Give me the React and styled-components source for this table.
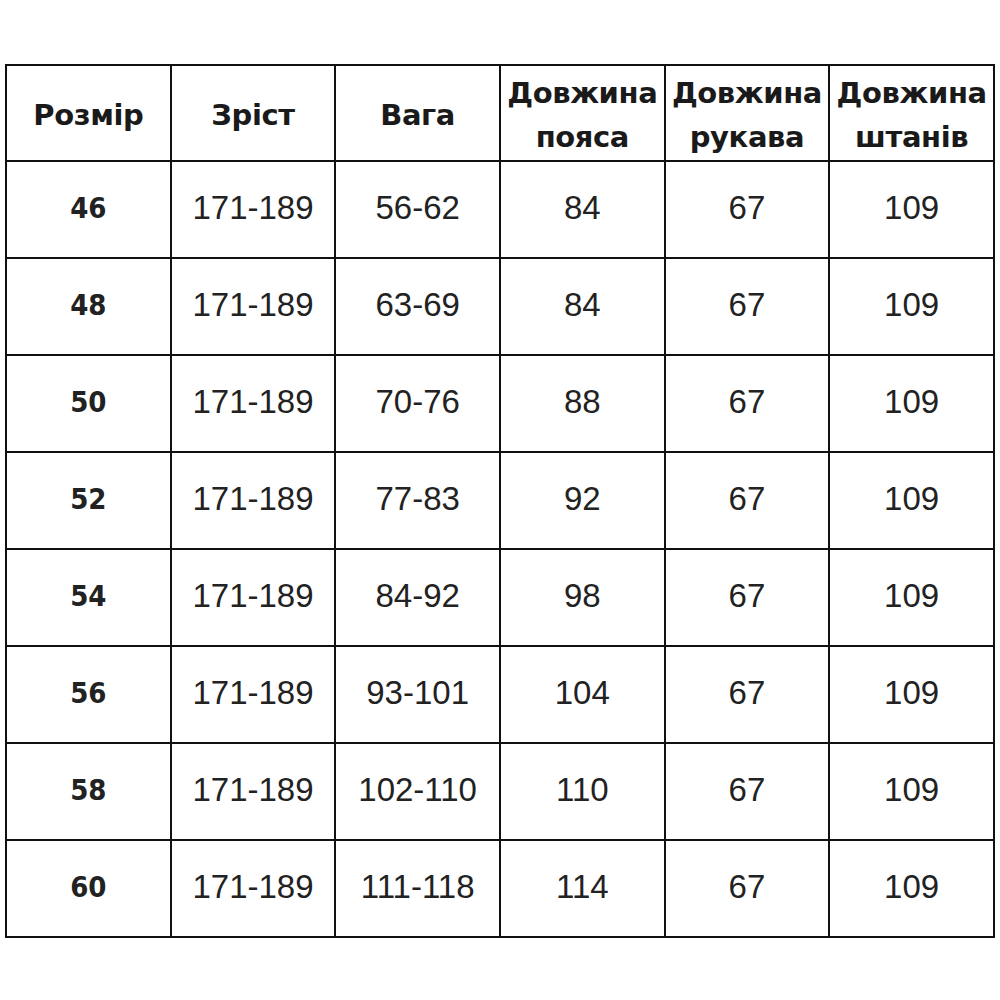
import React from "react";
import styled, { createGlobalStyle } from "styled-components";

const GlobalStyle = createGlobalStyle`
  html, body {
    margin: 0;
    padding: 0;
    background: #ffffff;
  }
`;

const headers = [
  ["Розмір"],
  ["Зріст"],
  ["Вага"],
  ["Довжина", "пояса"],
  ["Довжина", "рукава"],
  ["Довжина", "штанів"],
];

const rows = [
  ["46", "171-189", "56-62", "84", "67", "109"],
  ["48", "171-189", "63-69", "84", "67", "109"],
  ["50", "171-189", "70-76", "88", "67", "109"],
  ["52", "171-189", "77-83", "92", "67", "109"],
  ["54", "171-189", "84-92", "98", "67", "109"],
  ["56", "171-189", "93-101", "104", "67", "109"],
  ["58", "171-189", "102-110", "110", "67", "109"],
  ["60", "171-189", "111-118", "114", "67", "109"],
];

export default function App() {
  return (
    <>
      <GlobalStyle />
      <Page>
        <SizeTable>
          <thead>
            <HeadRow>
              {headers.map((h, i) => (
                <HeadCell key={i}>
                  {h.map((line, j) => (
                    <HeadLine key={j}>{line}</HeadLine>
                  ))}
                </HeadCell>
              ))}
            </HeadRow>
          </thead>
          <tbody>
            {rows.map((r, i) => (
              <BodyRow key={i}>
                {r.map((v, j) => (
                  <Cell key={j} $bold={j === 0}>
                    {v}
                  </Cell>
                ))}
              </BodyRow>
            ))}
          </tbody>
        </SizeTable>
      </Page>
    </>
  );
}

const Page = styled.div`
  width: 1000px;
  height: 1000px;
  box-sizing: border-box;
  padding: 64px 0 0 5px;
  background: #ffffff;
`;

const SizeTable = styled.table`
  width: 990px;
  table-layout: fixed;
  border-collapse: collapse;
  border: 2px solid #111;
`;

const HeadRow = styled.tr`
  height: 96px;
`;

const BodyRow = styled.tr`
  height: 97px;
`;

const HeadCell = styled.th`
  border: 2px solid #111;
  padding: 4px 0 0;
  text-align: center;
  vertical-align: middle;
  font-family: "DejaVu Sans", Verdana, sans-serif;
  font-weight: 700;
  font-size: 29px;
  color: #1a1a1a;
  letter-spacing: -0.4px;
`;

const HeadLine = styled.div`
  line-height: 44px;
  white-space: nowrap;
`;

const Cell = styled.td`
  border: 2px solid #111;
  padding: 0 0 4px;
  text-align: center;
  vertical-align: middle;
  color: #222;
  font-family: ${(p) =>
    p.$bold
      ? `"DejaVu Sans Condensed", "DejaVu Sans", Verdana, sans-serif`
      : `"Liberation Sans", Arial, sans-serif`};
  font-weight: ${(p) => (p.$bold ? 700 : 400)};
  font-size: ${(p) => (p.$bold ? "29px" : "33px")};
`;
